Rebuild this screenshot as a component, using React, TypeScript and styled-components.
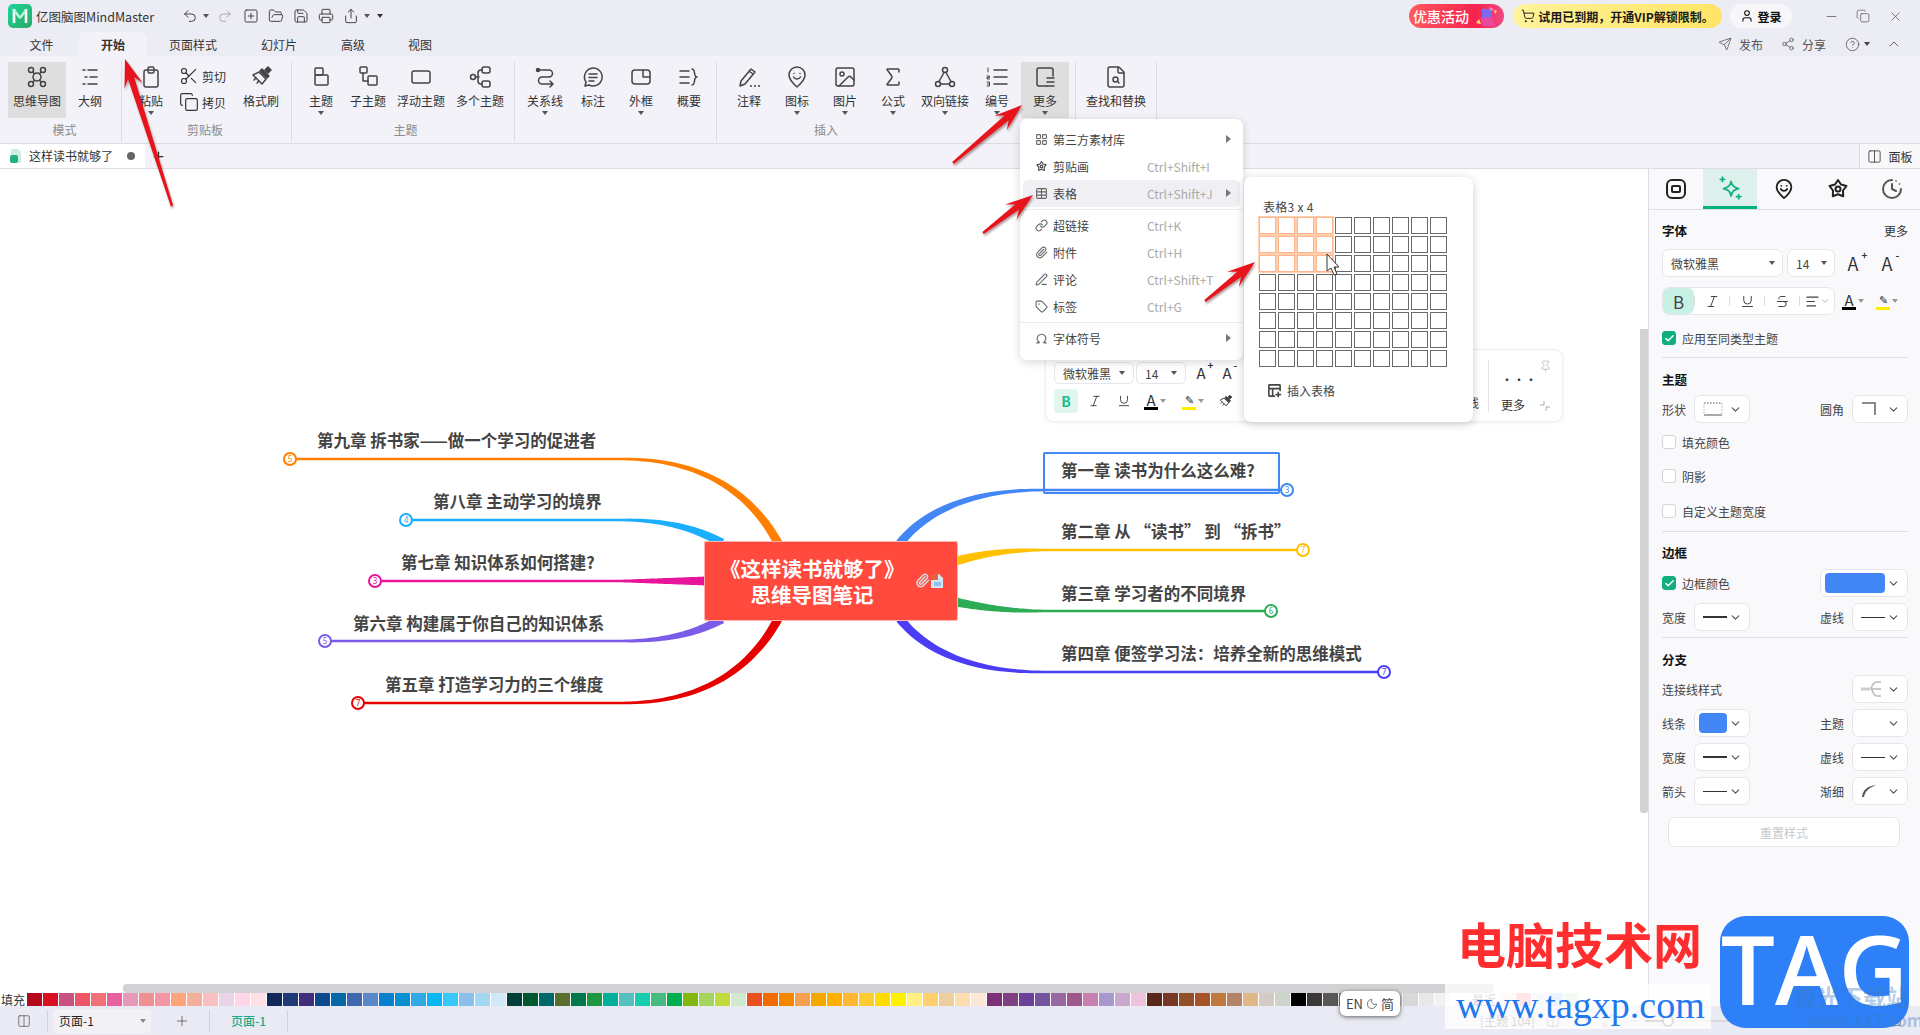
import * as React from 'react';
import styled, { createGlobalStyle } from 'styled-components';
import {
	Undo2, Redo2, SquarePlus, FolderOpen, Save, Printer, Share, ChevronUp, ChevronDown, User, ShoppingCart,
	Send, Share2, CircleHelp, X, Minus, Scissors, Copy, Image, Sigma, Plus, Columns2, Maximize, Pin,
	LayoutGrid, Link, Paperclip, Tag, Omega, Table, PenLine, Italic, Underline, Strikethrough, AlignLeft,
	Check, Square, FileSearch, Moon,
} from 'lucide-react';

const FONT = '"Noto Sans CJK SC", "Noto Sans", "Liberation Sans", sans-serif';

const GlobalStyle = createGlobalStyle`
	html, body { margin: 0; padding: 0; background: #fff; }
	body { font-family: ${FONT}; font-size: 12px; color: #333; }
	* { box-sizing: border-box; }
`;

/* ---------- shell ---------- */

const Page = styled.div`
	position: relative;
	width: 1920px;
	height: 1035px;
	overflow: hidden;
	display: flex;
	flex-direction: column;
	background: #fff;
`;

const TitleBar = styled.div`
	height: 32px;
	display: flex;
	align-items: center;
	background: #ececf4;
	padding-left: 8px;
`;

const AppName = styled.span`
	margin-left: 4px;
	font-size: 12.5px;
	color: #333;
	width: 144px;
`;

const QuickBtn = styled.span<{ $w?: number; $faint?: boolean }>`
	width: ${p => p.$w || 25}px;
	display: flex;
	align-items: center;
	justify-content: center;
	color: ${p => (p.$faint ? '#aaa' : '#444')};
`;

const TitleRight = styled.div`
	margin-left: auto;
	padding-right: 9px;
	display: flex;
	align-items: center;
`;

const Pill = styled.div<{ $w: number; $bg: string; $fg: string; $mr: number }>`
	width: ${p => p.$w}px;
	height: 24px;
	margin-right: ${p => p.$mr}px;
	border-radius: 12px;
	background: ${p => p.$bg};
	color: ${p => p.$fg};
	display: flex;
	align-items: center;
	justify-content: center;
	gap: 3px;
	font-size: 12px;
	font-weight: 700;
`;

const PromoText = styled.span`
	font-size: 14px;
	font-weight: 500;
	margin-right: 2px;
`;

const WinBtn = styled.span`
	width: 32px;
	display: flex;
	justify-content: center;
	color: #555;
`;

const TabRow = styled.div`
	height: 24px;
	display: flex;
	padding-left: 4px;
	background: #ececf4;
`;

const MenuTab = styled.div<{ $w: number; $active?: boolean }>`
	width: ${p => p.$w}px;
	display: flex;
	align-items: center;
	justify-content: center;
	font-size: 12px;
	font-weight: ${p => (p.$active ? 700 : 400)};
	color: #333;
	background: ${p => (p.$active ? '#f2f2f8' : 'transparent')};
	border-radius: 6px 6px 0 0;
`;

const TabActions = styled.div`
	margin-left: auto;
	display: flex;
	align-items: center;
	padding-right: 18px;
	color: #555;
`;

const ActionBtn = styled.span<{ $mr: number; $gap: number }>`
	display: flex;
	align-items: center;
	gap: ${p => p.$gap}px;
	margin-right: ${p => p.$mr}px;
	font-size: 12px;
	color: #555;
`;

/* ---------- ribbon ---------- */

const Ribbon = styled.div`
	height: 87px;
	display: flex;
	background: #f2f2f8;
	padding-left: 0;
`;

const Group = styled.div<{ $w: number; $pl: number }>`
	width: ${p => p.$w}px;
	margin-top: 6px;
	margin-bottom: 1px;
	padding-left: ${p => p.$pl}px;
	display: flex;
	flex-direction: column;
	border-right: 1px solid #dcdce2;
`;

const GroupBody = styled.div`
	height: 56px;
	display: flex;
`;

const GroupLabel = styled.div<{ $shift?: number }>`
	margin-top: 2px;
	height: 20px;
	line-height: 20px;
	text-align: center;
	font-size: 12px;
	color: #8c8c8c;
	transform: translateX(${p => p.$shift || 0}px);
`;

const RibbonBtn = styled.div<{ $w: number; $active?: boolean }>`
	width: ${p => p.$w}px;
	height: 56px;
	padding-top: 3px;
	display: flex;
	flex-direction: column;
	align-items: center;
	color: #444;
	background: ${p => (p.$active ? '#dededf' : 'transparent')};
`;

const RibbonLabel = styled.span`
	margin-top: 4px;
	height: 16px;
	line-height: 16px;
	font-size: 12px;
	color: #333;
	white-space: nowrap;
`;

const Caret = styled.i<{ $c?: string }>`
	display: inline-block;
	width: 0;
	height: 0;
	border-left: 3px solid transparent;
	border-right: 3px solid transparent;
	border-top: 4px solid ${p => p.$c || '#555'};
`;

const RibbonCaret = styled(Caret)`
	margin-top: 2px;
`;

const ClipColumn = styled.div`
	width: 64px;
	display: flex;
	flex-direction: column;
	justify-content: space-between;
	padding: 3px 0 5px 4px;
`;

const ClipRow = styled.div`
	height: 22px;
	display: flex;
	align-items: center;
	gap: 3px;
	font-size: 12px;
	color: #333;
`;

/* ---------- document tabs ---------- */

const DocBar = styled.div`
	height: 26px;
	display: flex;
	align-items: stretch;
	background: #f2f2f8;
	border-top: 1px solid #dcdce2;
	border-bottom: 1px solid #dcdce2;
`;

const DocTab = styled.div`
	width: 145px;
	background: #fff;
	display: flex;
	align-items: center;
	padding: 0 0 1px 9px;
	gap: 6px;
	font-size: 12px;
`;

const DocDot = styled.i`
	width: 8px;
	height: 8px;
	margin-left: 8px;
	border-radius: 50%;
	background: #666;
`;

const AddDoc = styled.span`
	margin-left: 6px;
	display: flex;
	align-items: center;
	color: #333;
`;

const PanelToggle = styled.div`
	margin-left: auto;
	width: 61px;
	background: #f8f8fb;
	border-left: 1px solid #dcdce2;
	display: flex;
	align-items: center;
	justify-content: center;
	gap: 6px;
	font-size: 12px;
`;

/* ---------- main area ---------- */

const Main = styled.div`
	flex: 1;
	display: flex;
	min-height: 0;
`;

const LeftArea = styled.div`
	width: 1648px;
	display: flex;
	flex-direction: column;
`;

const Canvas = styled.div`
	position: relative;
	flex: 1;
	background: #fff;
`;

const MapSvg = styled.svg`
	position: absolute;
	left: 0;
	top: 0;
`;

const TopicText = styled.div<{ $x: number; $y: number }>`
	position: absolute;
	left: ${p => p.$x}px;
	top: ${p => p.$y - 168 - 14}px;
	height: 24px;
	line-height: 24px;
	font-size: 16.5px;
	font-weight: 700;
	color: #444;
	white-space: nowrap;
`;

const SelectBox = styled.div`
	position: absolute;
	left: 1043px;
	top: ${451 - 168}px;
	width: 237px;
	height: 42px;
	border: 2px solid #4287f5;
	border-radius: 2px;
`;

const CentralTopic = styled.div`
	position: absolute;
	left: 704px;
	top: ${540 - 168}px;
	width: 254px;
	height: 80px;
	background: #ff4a3d;
	border-radius: 3px;
	box-shadow: 0 0 0 1px #ffb4ae inset;
	color: #fff;
	font-size: 20.5px;
	font-weight: 700;
	line-height: 26px;
	display: flex;
	align-items: center;
	padding-left: 16px;
`;

const CentralTitle = styled.div`
	width: 184px;
	text-align: center;
	white-space: nowrap;
`;

const CentralIcons = styled.div`
	position: absolute;
	right: 14px;
	top: 32px;
	display: flex;
`;

const VScroll = styled.div`
	position: absolute;
	right: 0;
	top: ${328 - 168}px;
	width: 8px;
	height: 484px;
	background: #d2d2d4;
	border-radius: 0 0 3px 3px;
`;

const HScrollTrack = styled.div`
	height: 9px;
	padding-left: 123px;
	background: #fff;
`;

const HScrollThumb = styled.div`
	width: 1371px;
	height: 9px;
	background: #d2d2d4;
	border-radius: 4px;
`;

const ColorBar = styled.div`
	height: 13px;
	display: flex;
	align-items: center;
	background: #fff;
`;

const FillLabel = styled.span`
	width: 27px;
	padding-left: 1px;
	font-size: 12px;
	line-height: 13px;
	color: #333;
`;

const Swatch = styled.i<{ $c: string }>`
	width: 16px;
	height: 13px;
	border-right: 1px solid #fff;
	background: ${p => p.$c};
`;

const RecentLabel = styled.span`
	margin-left: 21px;
	width: 28px;
	font-size: 12px;
	color: #555;
`;

const StatusBar = styled.div`
	height: 29px;
	display: flex;
	align-items: center;
	background: #eaeaf4;
`;

const StatusCell = styled.div<{ $w: number; $green?: boolean; $line?: boolean }>`
	width: ${p => p.$w}px;
	height: 22px;
	display: flex;
	align-items: center;
	justify-content: center;
	font-size: 12px;
	color: ${p => (p.$green ? '#1aaa88' : '#555')};
	font-weight: ${p => (p.$green ? 500 : 400)};
	border-right: ${p => (p.$line ? '1px solid #d2d2da' : 'none')};
`;

const PageSelect = styled.div`
	width: 98px;
	height: 24px;
	margin: 0 4px 0 5px;
	padding: 0 5px 0 6px;
	border-radius: 4px;
	background: #f2f2f6;
	display: flex;
	align-items: center;
	justify-content: space-between;
	font-size: 12px;
	color: #222;
`;

const StatusRight = styled.div`
	margin-left: auto;
	margin-right: 8px;
	display: flex;
	align-items: center;
	color: #777;
`;

const ZoomTrack = styled.div`
	position: relative;
	width: 100px;
	height: 2px;
	background: linear-gradient(90deg, #666 24px, #d8d8de 24px);
`;

const ZoomKnob = styled.i`
	position: absolute;
	left: 17px;
	top: -5px;
	width: 12px;
	height: 12px;
	border-radius: 50%;
	background: #fff;
	border: 2px solid #666;
`;

/* ---------- right panel ---------- */

const Panel = styled.aside`
	width: 272px;
	background: #f9f9fc;
	border-left: 1px solid #dcdce2;
`;

const PanelTabs = styled.div`
	height: 41px;
	display: flex;
	border-bottom: 1px solid #e0e0e4;
	color: #222;
`;

const PanelTab = styled.div<{ $active?: boolean }>`
	width: 54px;
	display: flex;
	align-items: center;
	justify-content: center;
	background: ${p => (p.$active ? '#ddf0eb' : 'transparent')};
	border-bottom: ${p => (p.$active ? '3px solid #00b27a' : 'none')};
	color: ${p => (p.$active ? '#10b27e' : 'inherit')};
`;

const PanelBody = styled.div`
	padding: 12px 12px 0 13px;
`;

const SectionHead = styled.div<{ $mt?: number }>`
	height: 18px;
	line-height: 18px;
	margin-top: ${p => p.$mt || 0}px;
	display: flex;
	justify-content: space-between;
	font-size: 12.5px;
	font-weight: 700;
	color: #111;
`;

const MoreLink = styled.span`
	font-size: 12px;
	font-weight: 400;
	color: #333;
`;

const Row = styled.div<{ $mt: number; $between?: boolean }>`
	height: 28px;
	margin-top: ${p => p.$mt}px;
	display: flex;
	align-items: center;
	justify-content: ${p => (p.$between ? 'space-between' : 'flex-start')};
`;

const Cluster = styled.div`
	display: flex;
	align-items: center;
`;

const FieldLabel = styled.span`
	width: 32px;
	font-size: 12px;
	color: #444;
	white-space: nowrap;
`;

const Select = styled.div<{ $w: number; $ml?: number }>`
	width: ${p => p.$w}px;
	height: 28px;
	margin-left: ${p => p.$ml || 0}px;
	padding: 0 7px 0 8px;
	background: #fff;
	border: 1px solid #e6e6ea;
	border-radius: 7px;
	display: flex;
	align-items: center;
	justify-content: space-between;
	font-size: 12px;
	color: #444;
`;

const IconBtn = styled.span<{ $w: number }>`
	width: ${p => p.$w}px;
	display: flex;
	align-items: center;
	justify-content: center;
	gap: 2px;
	color: #333;
`;

const BigA = styled.span<{ $size: number }>`
	font-size: ${p => p.$size}px;
	line-height: 20px;
	font-weight: 400;
	position: relative;
	color: #333;
	sup {
		position: absolute;
		left: ${p => p.$size - 4}px;
		top: -5px;
		font-size: 10px;
		line-height: 14px;
		font-weight: 700;
	}
`;

const StyleStrip = styled.div`
	width: 173px;
	height: 28px;
	background: #fff;
	border: 1px solid #e6e6ea;
	border-radius: 7px;
	display: flex;
	align-items: center;
`;

const StripBtn = styled.span<{ $w: number; $on?: boolean }>`
	width: ${p => p.$w}px;
	height: 26px;
	display: flex;
	align-items: center;
	justify-content: center;
	font-size: 17px;
	color: #444;
	border-radius: 6px;
	background: ${p => (p.$on ? '#c9f0e4' : 'transparent')};
`;

const StripSep = styled.i`
	width: 1px;
	height: 10px;
	background: #ddd;
`;

const ColorA = styled.span<{ $bar: string; $size?: number }>`
	display: inline-flex;
	flex-direction: column;
	align-items: center;
	width: 14px;
	font-size: ${p => p.$size || 15}px;
	line-height: 15px;
	color: #333;
	&::after {
		content: '';
		width: 14px;
		height: 3px;
		background: ${p => p.$bar};
	}
`;

const CheckRow = styled.div<{ $mt: number }>`
	height: 18px;
	margin-top: ${p => p.$mt}px;
	display: flex;
	align-items: center;
	gap: 6px;
	font-size: 12px;
	color: #444;
`;

const CheckBox = styled.span<{ $on?: boolean }>`
	width: 14px;
	height: 14px;
	border-radius: 3px;
	display: flex;
	align-items: center;
	justify-content: center;
	border: 1px solid ${p => (p.$on ? '#12ae7e' : '#d4d4d8')};
	background: ${p => (p.$on ? '#12ae7e' : '#fff')};
	color: #fff;
`;

const Divider = styled.div<{ $mt: number }>`
	height: 1px;
	margin-top: ${p => p.$mt}px;
	background: #e0e0e4;
`;

const ColorFill = styled.i<{ $w: number }>`
	width: ${p => p.$w}px;
	height: 20px;
	margin-left: -4px;
	border-radius: 4px;
	background: #4287f5;
`;

const LineSample = styled.i<{ $h: number }>`
	width: 24px;
	height: ${p => p.$h}px;
	background: #333;
`;

const ResetBtn = styled.div`
	width: 232px;
	height: 30px;
	margin: 12px 0 0 6px;
	border: 1px solid #e6e6ea;
	border-radius: 7px;
	background: #fff;
	display: flex;
	align-items: center;
	justify-content: center;
	font-size: 12px;
	color: #c8c8c8;
`;

/* ---------- floating bits ---------- */

const MiniBar = styled.div`
	position: absolute;
	left: 1045px;
	top: 349px;
	width: 518px;
	height: 73px;
	background: #fff;
	border: 1px solid #eeeef0;
	border-radius: 8px;
	box-shadow: 0 1px 4px rgba(0, 0, 0, 0.06);
	padding: 12px 0 0 8px;
`;

const MiniRow = styled.div<{ $mt?: number }>`
	display: flex;
	align-items: center;
	margin-top: ${p => p.$mt || 0}px;
`;

const MiniSelect = styled.div<{ $w: number }>`
	width: ${p => p.$w}px;
	height: 22px;
	margin-right: 2px;
	padding: 0 8px;
	border: 1px solid #e6e6ea;
	border-radius: 5px;
	display: flex;
	align-items: center;
	justify-content: space-between;
	font-size: 12px;
	color: #444;
`;

const MiniBold = styled.span`
	width: 24px;
	height: 24px;
	border-radius: 4px;
	background: #e2f6f0;
	color: #18be90;
	font-weight: 700;
	font-size: 14px;
	display: flex;
	align-items: center;
	justify-content: center;
`;

const MiniTail = styled.div`
	position: absolute;
	left: 442px;
	top: 10px;
	width: 76px;
	height: 52px;
	border-left: 1px solid #e4e4e8;
	color: #888;
`;

const MiniMore = styled.div`
	position: absolute;
	left: 12px;
	top: 7px;
	width: 24px;
	text-align: center;
	color: #333;
	font-size: 12px;
	line-height: 25px;
`;

const MiniPin = styled.span<{ $top: number }>`
	position: absolute;
	left: 50px;
	top: ${p => p.$top}px;
	display: flex;
`;

const MiniCut = styled.span`
	position: absolute;
	left: 421px;
	top: 44px;
	font-size: 12px;
	color: #444;
`;

const DropMenu = styled.div`
	position: absolute;
	left: 1020px;
	top: 119px;
	width: 223px;
	padding: 7px 0 8px;
	background: #fff;
	border-radius: 7px;
	box-shadow: 0 2px 10px rgba(0, 0, 0, 0.16);
`;

const MenuItem = styled.div<{ $hover?: boolean }>`
	height: 27px;
	margin: 0 3px;
	padding-left: 12px;
	display: flex;
	align-items: center;
	border-radius: 5px;
	background: ${p => (p.$hover ? '#f0f0f4' : 'transparent')};
	font-size: 12px;
	color: #444;
	position: relative;
`;

const MenuName = styled.span`
	margin-left: 5px;
	width: 94px;
`;

const MenuKey = styled.span`
	color: #aaa;
	font-size: 12px;
`;

const MenuArrow = styled.i`
	position: absolute;
	right: 9px;
	top: 9px;
	border-top: 4.5px solid transparent;
	border-bottom: 4.5px solid transparent;
	border-left: 5px solid #777;
`;

const MenuLine = styled.div<{ $mt: number; $mb: number }>`
	height: 1px;
	margin: ${p => p.$mt}px 0 ${p => p.$mb}px;
	background: #ececf0;
`;

const TablePop = styled.div`
	position: absolute;
	left: 1244px;
	top: 177px;
	width: 229px;
	height: 245px;
	padding: 21px 0 0 15px;
	background: #fff;
	border-radius: 7px;
	box-shadow: 0 2px 10px rgba(0, 0, 0, 0.2);
`;

const PopTitle = styled.div`
	height: 18px;
	line-height: 18px;
	padding-left: 4px;
	font-size: 12px;
	letter-spacing: 0.3px;
	color: #444;
`;

const CellGrid = styled.div`
	margin-top: 1px;
	display: grid;
	grid-template-columns: repeat(10, 17px);
	grid-auto-rows: 17px;
	gap: 2px;
`;

const Cell = styled.i<{ $on?: boolean }>`
	border: 1.5px solid ${p => (p.$on ? '#ffb48c' : '#6a6a6a')};
	box-shadow: ${p => (p.$on ? '0 0 0 1px #ffd0b0' : 'none')};
	background: #fff;
`;

const InsertRow = styled.div`
	margin: 15px 0 0 8px;
	display: flex;
	align-items: center;
	gap: 5px;
	font-size: 12px;
	color: #444;
`;

const ImeBadge = styled.div`
	position: absolute;
	left: 1340px;
	top: 991px;
	width: 60px;
	height: 25px;
	background: #fff;
	border-radius: 6px;
	box-shadow: 0 1px 4px rgba(0, 0, 0, 0.6);
	display: flex;
	align-items: center;
	justify-content: center;
	gap: 3px;
	font-size: 13px;
	color: #444;
`;

const Overlay = styled.svg`
	position: absolute;
	left: 0;
	top: 0;
	pointer-events: none;
`;

const ArrowShape = styled.polygon`
	fill: #e8141c;
	filter: drop-shadow(1px 2px 1px rgba(60, 0, 0, 0.4));
`;

const WashRect = styled.div`
	position: absolute;
	left: 1445px;
	top: 984px;
	width: 266px;
	height: 45px;
	background: rgba(255, 255, 255, 0.78);
`;

const SiteName = styled.div`
	position: absolute;
	left: 1457px;
	top: 909px;
	font-size: 49px;
	line-height: 68px;
	font-weight: 700;
	color: #ff2d2d;
	white-space: nowrap;
`;

const SiteUrl = styled.div`
	position: absolute;
	left: 1456px;
	top: 985px;
	font-family: 'Liberation Serif', serif;
	font-size: 38px;
	line-height: 40px;
	font-weight: 400;
	color: #1f78ee;
	white-space: nowrap;
`;

const TagBadge = styled.div`
	position: absolute;
	left: 1720px;
	top: 916px;
	width: 189px;
	height: 112px;
	border-radius: 26px;
	background: #2e80f8;
	color: #fff;
	font-family: 'Open Sans', 'Liberation Sans', sans-serif;
	font-size: 96px;
	line-height: 104px;
	font-weight: 600;
	text-align: center;
	overflow: hidden;
`;

const FaintMark = styled.div<{ $x: number; $y: number; $size: number }>`
	position: absolute;
	left: ${p => p.$x}px;
	top: ${p => p.$y}px;
	font-size: ${p => p.$size}px;
	line-height: 1;
	font-weight: 700;
	color: rgba(60, 120, 190, 0.38);
	white-space: nowrap;
`;

/* ---------- drawings ---------- */

const Glyph = styled.svg.attrs<{ $s?: number; $sw?: number }>(p => ({
	viewBox: '0 0 24 24',
	width: p.$s || 24,
	height: p.$s || 24,
}))<{ $s?: number; $sw?: number }>`
	fill: none;
	stroke: currentColor;
	stroke-width: ${p => p.$sw || 1.5};
	stroke-linecap: round;
	stroke-linejoin: round;
	flex: none;
`;

const MindIcon = () => (
	<Glyph>
		<circle cx="6" cy="5" r="2.5" /><circle cx="18" cy="5" r="2.5" /><circle cx="6" cy="19" r="2.5" /><circle cx="18" cy="19" r="2.5" />
		<circle cx="12" cy="12" r="4" /><path d="M8 7l1.5 2M16 7l-1.5 2M8 17l1.5-2M16 17l-1.5-2" />
	</Glyph>
);
const OutlineIcon = () => (
	<Glyph><path d="M5 5h2M10 5h9M7 12h2M12 12h7M5 19h2M10 19h9" /></Glyph>
);
const PasteIcon = () => (
	<Glyph><rect x="5" y="5" width="14" height="17" rx="2" /><rect x="9" y="2" width="6" height="6" rx="1.5" /></Glyph>
);
const BrushIcon = ({ s = 24 }: { s?: number }) => (
	<Glyph $s={s}>
		<path d="M10 7l7 7-4 5-9-9z" />
		<path d="M11 6l2-2 7 7-2 2z" fill="currentColor" />
		<path d="M16 5l3-3 3 3-3 3z" fill="currentColor" />
		<path d="M7 13l-2 2M10 16l-2 2" />
	</Glyph>
);
const TopicIcon = () => (
	<Glyph><rect x="6" y="3" width="8" height="7" rx="1" /><rect x="6" y="10" width="13" height="10" rx="1" /></Glyph>
);
const SubTopicIcon = () => (
	<Glyph><rect x="4" y="2" width="7" height="6" rx="1" /><path d="M7 8v8h5" /><rect x="12" y="11" width="9" height="9" rx="1" /></Glyph>
);
const FloatIcon = () => <Glyph><rect x="3" y="6" width="18" height="12" rx="2" /></Glyph>;
const MultiIcon = () => (
	<Glyph>
		<rect x="14" y="2" width="8" height="6" rx="2" /><rect x="14" y="16" width="8" height="6" rx="2" /><circle cx="5" cy="12" r="2.5" />
		<path d="M7.500 12H11M14 5h-1a3 3 0 0 0-3 3v8a3 3 0 0 0 3 3h1" />
	</Glyph>
);
const RelationIcon = () => (
	<Glyph><circle cx="5" cy="5" r="1.500" fill="currentColor" /><path d="M6 5h10a3.500 3.500 0 0 1 0 7H9a3.500 3.500 0 0 0 0 7h11M17 16l3 3-3 3" /></Glyph>
);
const CalloutIcon = () => (
	<Glyph><path d="M12 3a9 9 0 1 1-4 17l-4 1 1-4a9 9 0 0 1 7-14z" /><path d="M8 9h8M8 12.500h8M8 16h5" /></Glyph>
);
const FrameIcon = () => (
	<Glyph><rect x="3" y="5" width="18" height="14" rx="3" /><path d="M14 5v7h7" /></Glyph>
);
const SummaryIcon = () => (
	<Glyph><path d="M3 6h9M3 12h9M3 18h9M15 4c4 0 1 8 5 8-4 0-1 8-5 8" /></Glyph>
);
const NoteIcon = () => (
	<Glyph><path d="M3 21l1-5L14 4l4 3L8 19zM12 6l4 3" /><path d="M14 21h.01M18 21h.01M22 21h.01" strokeWidth="2" /></Glyph>
);
const PinFace = ({ s = 24, sw = 1.5 }: { s?: number; sw?: number }) => (
	<Glyph $s={s} $sw={sw}>
		<path d="M12 2a8 8 0 0 1 8 8c0 5-8 12-8 12S4 15 4 10a8 8 0 0 1 8-8z" />
		<path d="M9 8.500h.01M15 8.500h.01M8.500 12a4 4 0 0 0 7 0" />
	</Glyph>
);
const BiLinkIcon = () => (
	<Glyph><circle cx="12" cy="5" r="2.500" /><circle cx="5" cy="19" r="2.500" /><circle cx="19" cy="19" r="2.500" /><path d="M11 7.500L6 16.500M13 7.500l5 9M7.500 19h9" /></Glyph>
);
const NumberIcon = () => (
	<Glyph>
		<path d="M9 5h13M9 12h13M9 19h13" />
		<path d="M3 3v4M2 11h2.500v1.500H2V14h2.500M2 17h2.500v4H2M2.500 19h2" strokeWidth="1" />
	</Glyph>
);
const MoreIcon = () => (
	<Glyph><path d="M20 11V5a2 2 0 0 0-2-2H6a2 2 0 0 0-2 2v14a2 2 0 0 0 2 2h8" /><path d="M14 13h7M14 17h7M14 21h7" /></Glyph>
);
const BoxTabIcon = () => (
	<Glyph $sw={2}><rect x="3" y="3" width="18" height="18" rx="5" /><rect x="8" y="9" width="8" height="6" rx="1" /></Glyph>
);
const SparkIcon = () => (
	<Glyph $s={26} $sw={1.6}>
		<path d="M13 6c1 4 2.500 5.500 7 6.500-4.500 1-6 2.500-7 7-1-4.500-2.500-6-7-7 4.500-1 6-2.500 7-6.500z" />
		<path d="M5 2v4M3 4h4M20 18v4M18 20h4" />
	</Glyph>
);
const FlowerIcon = ({ s = 24, sw = 2 }: { s?: number; sw?: number }) => (
	<Glyph $s={s} $sw={sw}>
		<path d="M12 3l3 4.500 5.500 1.500-3.500 4.500.2 5.700-5.200-2-5.200 2 .2-5.700L3.500 9 9 7.500z" />
		<circle cx="12" cy="12" r="2.500" />
	</Glyph>
);
const HistoryIcon = () => (
	<Glyph $sw={2}>
		<path d="M12 3a9 9 0 1 0 9 9" stroke="#555" />
		<path d="M12 7v5l4 2" stroke="#555" /><path d="M16 4l.01 0M19.500 7l.01 0" stroke="#888" />
	</Glyph>
);
const InsertTableIcon = () => (
	<Glyph $s={15} $sw={2.6}>
		<path d="M12 21H4a1 1 0 0 1-1-1V4a1 1 0 0 1 1-1h16a1 1 0 0 1 1 1v8M3 9h18M9 9v12" />
		<path d="M18 15v7M14.500 18.500h7" />
	</Glyph>
);
const LogoMark = () => (
	<svg width="24" height="24" viewBox="0 0 24 24">
		<defs>
			<linearGradient id="lg" x1="0" y1="0" x2="1" y2="1">
				<stop offset="0" stopColor="#1ed69a" />
				<stop offset="1" stopColor="#2aa868" />
			</linearGradient>
		</defs>
		<rect width="24" height="24" rx="5" fill="url(#lg)" />
		<path d="M6 5v14M18 5v14" stroke="#fff" strokeWidth="2.600" />
		<path d="M6 6l6 8M18 6l-6 8" stroke="#bff4dd" strokeWidth="2.400" />
	</svg>
);
const PromoGift = () => (
	<svg width="26" height="22" viewBox="0 0 26 22">
		<rect x="8" y="4" width="9" height="9" fill="#7a6cf0" />
		<path d="M6 13l12-1 3 9H9z" fill="#e84aa0" />
		<path d="M2 18l3-4 2 5zM20 5l3 1-2 3z" fill="#ffe060" />
		<path d="M15 2l5 2-3 2z" fill="#ff8ab0" />
	</svg>
);
const ShapePreview = () => (
	<svg width="20" height="14" viewBox="0 0 20 14">
		<path d="M1 1h18" stroke="#555" strokeDasharray="1.500 1.500" fill="none" />
		<path d="M1 1v12M19 1v12" stroke="#aaa" strokeDasharray="1.500 1.500" fill="none" />
		<path d="M1 13h18" stroke="#555" fill="none" />
	</svg>
);
const CornerPreview = () => (
	<svg width="16" height="14" viewBox="0 0 16 14"><path d="M1 1h13v12" stroke="#666" strokeWidth="1.500" fill="none" /></svg>
);
const BranchPreview = () => (
	<svg width="22" height="18" viewBox="0 0 22 18">
		<path d="M0 9h9" stroke="#ccc" strokeWidth="3" fill="none" />
		<path d="M20 2h-4c-4 0-4 3-6 6 2 3 2 8 6 8h4M10 9h10" stroke="#bbb" strokeWidth="1.500" fill="none" />
	</svg>
);
const TaperPreview = () => (
	<svg width="16" height="14" viewBox="0 0 16 14"><path d="M1 13C2 5 7 2 15 1 8 4 4 7 3 13z" fill="#555" /></svg>
);
const CollapseCorners = () => (
	<svg width="12" height="12" viewBox="0 0 12 12"><path d="M5 1v4H1M7 11V7h4" stroke="#aaa" fill="none" /></svg>
);
const Chevron = () => <ChevronDown size={13} color="#555" strokeWidth={2.2} />;

// tapered bezier from thin end p0 to thick end p3, as a filled outline
type Pt = [number, number];
function taperPath(p0: Pt, p1: Pt, p2: Pt, p3: Pt, w0: number, w1: number) {
	const left: string[] = [];
	const right: string[] = [];
	const n = 32;
	for (let i = 0; i <= n; i++) {
		const t = i / n;
		const u = 1 - t;
		const x = u * u * u * p0[0] + 3 * u * u * t * p1[0] + 3 * u * t * t * p2[0] + t * t * t * p3[0];
		const y = u * u * u * p0[1] + 3 * u * u * t * p1[1] + 3 * u * t * t * p2[1] + t * t * t * p3[1];
		const dx = 3 * u * u * (p1[0] - p0[0]) + 6 * u * t * (p2[0] - p1[0]) + 3 * t * t * (p3[0] - p2[0]);
		const dy = 3 * u * u * (p1[1] - p0[1]) + 6 * u * t * (p2[1] - p1[1]) + 3 * t * t * (p3[1] - p2[1]);
		const len = Math.hypot(dx, dy) || 1;
		const w = (w0 + (w1 - w0) * t) / 2;
		left.push(`${(x - (dy / len) * w).toFixed(1)},${(y + (dx / len) * w).toFixed(1)}`);
		right.unshift(`${(x + (dy / len) * w).toFixed(1)},${(y - (dx / len) * w).toFixed(1)}`);
	}
	return `M${left.join('L')}L${right.join('L')}Z`;
}

// annotation arrow, thin tail to a notched head
function arrowPoints(tail: Pt, tip: Pt) {
	const dx = tip[0] - tail[0];
	const dy = tip[1] - tail[1];
	const len = Math.hypot(dx, dy);
	const ux = dx / len;
	const uy = dy / len;
	const at = (along: number, side: number) =>
		`${(tip[0] - ux * along - uy * side).toFixed(1)},${(tip[1] - uy * along + ux * side).toFixed(1)}`;
	return [at(len, 1.2), at(20, 3.2), at(28, 9.5), at(0, 0), at(28, -9.5), at(20, -3.2), at(len, -1.2)].join(' ');
}

/* ---------- data ---------- */

const BRANCHES = [
	{ text: '第九章 拆书家——做一个学习的促进者', x: 317, ty: 441, ly: 458, cx: 290, n: 5, c: '#ff7f00', side: 'l', hub: [778, 542], c1: [700, 458], c2: [750, 490] },
	{ text: '第八章 主动学习的境界', x: 433, ty: 502, ly: 519, cx: 406, n: 4, c: '#1aaeff', side: 'l', hub: [722, 542], c1: [665, 519], c2: [695, 527] },
	{ text: '第七章 知识体系如何搭建?', x: 401, ty: 563, ly: 580, cx: 375, n: 3, c: '#e8149a', side: 'l', hub: [706, 580], c1: [650, 580], c2: [680, 580] },
	{ text: '第六章 构建属于你自己的知识体系', x: 353, ty: 624, ly: 640, cx: 325, n: 5, c: '#7b5ce8', side: 'l', hub: [722, 618], c1: [665, 640], c2: [695, 633] },
	{ text: '第五章 打造学习力的三个维度', x: 385, ty: 685, ly: 702, cx: 358, n: 7, c: '#e60000', side: 'l', hub: [778, 618], c1: [700, 702], c2: [750, 670] },
	{ text: '第一章 读书为什么这么难?', x: 1061, ty: 471, ly: 489, cx: 1287, n: 3, c: '#4287f5', side: 'r', hub: [900, 542], c1: [980, 489], c2: [930, 505] },
	{ text: '第二章 从 “读书” 到 “拆书”', x: 1061, ty: 532, ly: 549, cx: 1303, n: 7, c: '#ffc000', side: 'r', hub: [956, 560], c1: [1010, 549], c2: [985, 552] },
	{ text: '第三章 学习者的不同境界', x: 1061, ty: 594, ly: 610, cx: 1271, n: 6, c: '#2eab55', side: 'r', hub: [956, 601], c1: [1010, 610], c2: [985, 607] },
	{ text: '第四章 便签学习法：培养全新的思维模式', x: 1061, ty: 654, ly: 671, cx: 1384, n: 7, c: '#4a3df5', side: 'r', hub: [900, 618], c1: [980, 671], c2: [930, 655] },
];

const COLORS = [
	'#b5081a', '#d90f23', '#c85280', '#ee5567', '#f07278', '#e860a0', '#e59ab8', '#f09090', '#f595a5', '#ffa47a', '#f2b09a', '#f8c0c0', '#ead5e8', '#ffd6e8', '#ffe0e6',
	'#10285a', '#203a78', '#402e7c', '#0c4a90', '#0568a8', '#4068b0', '#5888c8', '#0880d0', '#0890d0', '#30aae4', '#08b8f4', '#38c8fa', '#8ac0ea', '#a4d8f0', '#cfeaf6',
	'#004038', '#005830', '#00686a', '#5a6e30', '#00784e', '#1e9840', '#00b09a', '#55c0c0', '#18ccb0', '#48bc80', '#00b050', '#80b810', '#a4d460', '#c0dc3c', '#d0ead0',
	'#e85020', '#f06c00', '#f48600', '#f4a050', '#f4a800', '#ffb000', '#ffb832', '#fccc30', '#ffdc00', '#fff000', '#fff080', '#ffd070', '#eccf9c', '#fddcb0', '#fde8d8',
	'#7c3078', '#804084', '#6a4098', '#74549c', '#9868a0', '#a0588c', '#c880b0', '#a898d0', '#c8a8cc', '#ecc4dc',
	'#5a2818', '#783828', '#944e28', '#a85228', '#c07a40', '#b48468', '#e0b888', '#d4ccc4', '#ccd4cc',
	'#000000', '#3c3838', '#585858', '#808080', '#989898', '#b0b0b0', '#c8c8c8', '#d8d8d8', '#e8e8e8', '#f2f2f2',
];

const RECENT = ['#ffe8e8', '#ff9090', '#dfe8fa', '#b0ccf4', '#cfe8cf'];

const ARROWS: [Pt, Pt][] = [
	[[172, 206], [125, 59]],
	[[953, 163], [1022, 105]],
	[[983, 233], [1033, 195]],
	[[1205, 301], [1255, 262]],
];

const Rb = ({ w, label, caret, active, children }: { w: number; label: string; caret?: boolean; active?: boolean; children: React.ReactNode }) => (
	<RibbonBtn $w={w} $active={active}>
		{children}
		<RibbonLabel>{label}</RibbonLabel>
		{caret && <RibbonCaret />}
	</RibbonBtn>
);

const MenuRow = ({ icon, name, hotkey, arrow, hover }: { icon: React.ReactNode; name: string; hotkey?: string; arrow?: boolean; hover?: boolean }) => (
	<MenuItem $hover={hover}>
		{icon}
		<MenuName>{name}</MenuName>
		{hotkey && <MenuKey>{hotkey}</MenuKey>}
		{arrow && <MenuArrow />}
	</MenuItem>
);

export default function App() {
	return (
		<Page>
			<GlobalStyle />

			<TitleBar>
				<LogoMark />
				<AppName>亿图脑图MindMaster</AppName>
				<QuickBtn $w={20}><Undo2 size={16} strokeWidth={1.5} /></QuickBtn>
				<QuickBtn $w={12}><Caret /></QuickBtn>
				<QuickBtn $w={26} $faint><Redo2 size={16} strokeWidth={1.5} /></QuickBtn>
				<QuickBtn><SquarePlus size={16} strokeWidth={1.5} /></QuickBtn>
				<QuickBtn><FolderOpen size={16} strokeWidth={1.5} /></QuickBtn>
				<QuickBtn><Save size={16} strokeWidth={1.5} /></QuickBtn>
				<QuickBtn><Printer size={16} strokeWidth={1.5} /></QuickBtn>
				<QuickBtn><Share size={16} strokeWidth={1.5} /></QuickBtn>
				<QuickBtn $w={8}><Caret /></QuickBtn>
				<QuickBtn $w={18}><Caret $c="#333" /></QuickBtn>
				<TitleRight>
					<Pill $w={95} $mr={9} $bg="linear-gradient(90deg, #ff5a5f, #f6224f 70%, #f04a80)" $fg="#fff">
						<PromoText>优惠活动</PromoText>
						<PromoGift />
					</Pill>
					<Pill $w={209} $mr={8} $bg="linear-gradient(90deg, #fff39a, #ffe466)" $fg="#1a1a1a">
						<ShoppingCart size={14} strokeWidth={1.6} />
						试用已到期，开通VIP解锁限制。
					</Pill>
					<Pill $w={62} $mr={23} $bg="#f7f7fa" $fg="#111">
						<User size={14} strokeWidth={1.8} />
						登录
					</Pill>
					<WinBtn><Minus size={15} strokeWidth={1.2} /></WinBtn>
					<WinBtn><Copy size={14} strokeWidth={1.2} /></WinBtn>
					<WinBtn><X size={15} strokeWidth={1.2} /></WinBtn>
				</TitleRight>
			</TitleBar>

			<TabRow>
				<MenuTab $w={75}>文件</MenuTab>
				<MenuTab $w={68} $active>开始</MenuTab>
				<MenuTab $w={92}>页面样式</MenuTab>
				<MenuTab $w={80}>幻灯片</MenuTab>
				<MenuTab $w={68}>高级</MenuTab>
				<MenuTab $w={66}>视图</MenuTab>
				<TabActions>
					<ActionBtn $mr={18} $gap={7}><Send size={14} strokeWidth={1.3} />发布</ActionBtn>
					<ActionBtn $mr={19} $gap={7}><Share2 size={14} strokeWidth={1.3} />分享</ActionBtn>
					<ActionBtn $mr={16} $gap={4}><CircleHelp size={15} strokeWidth={1.3} /><Caret $c="#444" /></ActionBtn>
					<ChevronUp size={16} strokeWidth={1.3} />
				</TabActions>
			</TabRow>

			<Ribbon>
				<Group $w={122} $pl={8}>
					<GroupBody>
						<Rb w={58} label="思维导图" active><MindIcon /></Rb>
						<Rb w={48} label="大纲"><OutlineIcon /></Rb>
					</GroupBody>
					<GroupLabel>模式</GroupLabel>
				</Group>
				<Group $w={170} $pl={5}>
					<GroupBody>
						<Rb w={48} label="粘贴" caret><PasteIcon /></Rb>
						<ClipColumn>
							<ClipRow><Scissors size={20} strokeWidth={1.4} />剪切</ClipRow>
							<ClipRow><Copy size={20} strokeWidth={1.4} />拷贝</ClipRow>
						</ClipColumn>
						<Rb w={44} label="格式刷"><BrushIcon /></Rb>
					</GroupBody>
					<GroupLabel $shift={-4}>剪贴板</GroupLabel>
				</Group>
				<Group $w={223} $pl={5}>
					<GroupBody>
						<Rb w={48} label="主题" caret><TopicIcon /></Rb>
						<Rb w={46} label="子主题"><SubTopicIcon /></Rb>
						<Rb w={60} label="浮动主题"><FloatIcon /></Rb>
						<Rb w={58} label="多个主题"><MultiIcon /></Rb>
					</GroupBody>
					<GroupLabel>主题</GroupLabel>
				</Group>
				<Group $w={202} $pl={6}>
					<GroupBody>
						<Rb w={48} label="关系线" caret><RelationIcon /></Rb>
						<Rb w={48} label="标注"><CalloutIcon /></Rb>
						<Rb w={48} label="外框" caret><FrameIcon /></Rb>
						<Rb w={48} label="概要"><SummaryIcon /></Rb>
					</GroupBody>
				</Group>
				<Group $w={359} $pl={8}>
					<GroupBody>
						<Rb w={48} label="注释"><NoteIcon /></Rb>
						<Rb w={48} label="图标" caret><PinFace /></Rb>
						<Rb w={48} label="图片" caret><Image size={24} strokeWidth={1.5} /></Rb>
						<Rb w={48} label="公式" caret><Sigma size={24} strokeWidth={1.5} /></Rb>
						<Rb w={56} label="双向链接" caret><BiLinkIcon /></Rb>
						<Rb w={48} label="编号" caret><NumberIcon /></Rb>
						<Rb w={48} label="更多" caret active><MoreIcon /></Rb>
					</GroupBody>
					<GroupLabel $shift={-74}>插入</GroupLabel>
				</Group>
				<Group $w={81} $pl={0}>
					<GroupBody>
						<Rb w={80} label="查找和替换"><FileSearch size={24} strokeWidth={1.5} /></Rb>
					</GroupBody>
				</Group>
			</Ribbon>

			<DocBar>
				<DocTab>
					<svg width="14" height="16" viewBox="0 0 14 16">
						<path d="M3 1h6l3 3v10a1 1 0 0 1-1 1H3a1 1 0 0 1-1-1V2a1 1 0 0 1 1-1z" fill="#cfeee0" />
						<rect x="1" y="7" width="8" height="8" rx="2" fill="#23b27c" />
					</svg>
					这样读书就够了
					<DocDot />
				</DocTab>
				<AddDoc><Plus size={15} strokeWidth={2} /></AddDoc>
				<PanelToggle><Columns2 size={15} strokeWidth={1.3} />面板</PanelToggle>
			</DocBar>

			<Main>
				<LeftArea>
					<Canvas>
						<MapSvg width="1648" height="816" viewBox="0 168 1648 816">
							{BRANCHES.map(b => {
								const stem: Pt = [b.side === 'l' ? 622 : 1043, b.ly];
								return (
									<g key={b.text}>
										<path
											d={taperPath(stem, b.c1 as Pt, b.c2 as Pt, b.hub as Pt, 2.5, 9)}
											fill={b.c}
										/>
										<line x1={b.cx} y1={b.ly} x2={stem[0]} y2={b.ly} stroke={b.c} strokeWidth="2.5" />
										<circle cx={b.cx} cy={b.ly} r="6" fill="#fff" stroke={b.c} strokeWidth="2" />
										<text x={b.cx} y={b.ly + 3} fontSize="8" textAnchor="middle" fill={b.c} fontFamily="Noto Sans">{b.n}</text>
									</g>
								);
							})}
						</MapSvg>
						<SelectBox />
						{BRANCHES.map(b => (
							<TopicText key={b.text} $x={b.x} $y={b.ty}>{b.text}</TopicText>
						))}
						<CentralTopic>
							<CentralTitle>《这样读书就够了》<br />思维导图笔记</CentralTitle>
							<CentralIcons>
								<Paperclip size={15} color="#d8d8d8" strokeWidth={2.4} />
								<svg width="14" height="16" viewBox="0 0 14 16">
									<path d="M1 1h8l4 4v10H1z" fill="#cfe4f5" />
									<rect x="1" y="1" width="7" height="6" fill="#e8643c" />
									<rect x="4" y="9" width="7" height="4" fill="#8fc0e8" />
								</svg>
							</CentralIcons>
						</CentralTopic>
						<VScroll />
					</Canvas>
					<HScrollTrack><HScrollThumb /></HScrollTrack>
					<ColorBar>
						<FillLabel>填充</FillLabel>
						{COLORS.map((c, i) => <Swatch key={i} $c={c} />)}
						<RecentLabel>最近</RecentLabel>
						{RECENT.map((c, i) => <Swatch key={i} $c={c} />)}
					</ColorBar>
				</LeftArea>

				<Panel>
					<PanelTabs>
						<PanelTab><BoxTabIcon /></PanelTab>
						<PanelTab $active><SparkIcon /></PanelTab>
						<PanelTab><PinFace s={22} sw={2} /></PanelTab>
						<PanelTab><FlowerIcon /></PanelTab>
						<PanelTab><HistoryIcon /></PanelTab>
					</PanelTabs>
					<PanelBody>
						<SectionHead>字体<MoreLink>更多</MoreLink></SectionHead>
						<Row $mt={9}>
							<Select $w={121}>微软雅黑<Caret /></Select>
							<Select $w={48} $ml={4}>14<Caret /></Select>
							<IconBtn $w={36}><BigA $size={18}>A<sup>+</sup></BigA></IconBtn>
							<IconBtn $w={32}><BigA $size={18}>A<sup>-</sup></BigA></IconBtn>
						</Row>
						<Row $mt={10}>
							<StyleStrip>
								<StripBtn $w={31} $on>B</StripBtn>
								<StripSep />
								<StripBtn $w={34}><Italic size={15} strokeWidth={1.6} /></StripBtn>
								<StripSep />
								<StripBtn $w={34}><Underline size={15} strokeWidth={1.6} /></StripBtn>
								<StripSep />
								<StripBtn $w={34}><Strikethrough size={15} strokeWidth={1.6} /></StripBtn>
								<StripSep />
								<StripBtn $w={34}><AlignLeft size={15} strokeWidth={1.8} /><ChevronDown size={10} color="#aaa" /></StripBtn>
							</StyleStrip>
							<IconBtn $w={36}><ColorA $bar="#000">A</ColorA><Caret $c="#999" /></IconBtn>
							<IconBtn $w={32}><ColorA $bar="#ffee00" $size={11}>✎</ColorA><Caret $c="#999" /></IconBtn>
						</Row>
						<CheckRow $mt={14}><CheckBox $on><Check size={11} strokeWidth={3} /></CheckBox>应用至同类型主题</CheckRow>
						<Divider $mt={10} />

						<SectionHead $mt={13}>主题</SectionHead>
						<Row $mt={6} $between>
							<Cluster><FieldLabel>形状</FieldLabel><Select $w={56}><ShapePreview /><Chevron /></Select></Cluster>
							<Cluster><FieldLabel>圆角</FieldLabel><Select $w={56}><CornerPreview /><Chevron /></Select></Cluster>
						</Row>
						<CheckRow $mt={10}><CheckBox />填充颜色</CheckRow>
						<CheckRow $mt={16}><CheckBox />阴影</CheckRow>
						<CheckRow $mt={17}><CheckBox />自定义主题宽度</CheckRow>
						<Divider $mt={11} />

						<SectionHead $mt={12}>边框</SectionHead>
						<Row $mt={7} $between>
							<CheckRow $mt={0}><CheckBox $on><Check size={11} strokeWidth={3} /></CheckBox>边框颜色</CheckRow>
							<Select $w={88}><ColorFill $w={60} /><Chevron /></Select>
						</Row>
						<Row $mt={6} $between>
							<Cluster><FieldLabel>宽度</FieldLabel><Select $w={56}><LineSample $h={2} /><Chevron /></Select></Cluster>
							<Cluster><FieldLabel>虚线</FieldLabel><Select $w={56}><LineSample $h={1} /><Chevron /></Select></Cluster>
						</Row>
						<Divider $mt={6} />

						<SectionHead $mt={13}>分支</SectionHead>
						<Row $mt={6} $between>
							<FieldLabel>连接线样式</FieldLabel>
							<Select $w={56}><BranchPreview /><Chevron /></Select>
						</Row>
						<Row $mt={6} $between>
							<Cluster><FieldLabel>线条</FieldLabel><Select $w={56}><ColorFill $w={28} /><Chevron /></Select></Cluster>
							<Cluster><FieldLabel>主题</FieldLabel><Select $w={56}><i /><Chevron /></Select></Cluster>
						</Row>
						<Row $mt={6} $between>
							<Cluster><FieldLabel>宽度</FieldLabel><Select $w={56}><LineSample $h={2} /><Chevron /></Select></Cluster>
							<Cluster><FieldLabel>虚线</FieldLabel><Select $w={56}><LineSample $h={1} /><Chevron /></Select></Cluster>
						</Row>
						<Row $mt={6} $between>
							<Cluster><FieldLabel>箭头</FieldLabel><Select $w={56}><LineSample $h={1} /><Chevron /></Select></Cluster>
							<Cluster><FieldLabel>渐细</FieldLabel><Select $w={56}><TaperPreview /><Chevron /></Select></Cluster>
						</Row>
						<ResetBtn>重置样式</ResetBtn>
					</PanelBody>
				</Panel>
			</Main>

			<StatusBar>
				<StatusCell $w={48} $line><Columns2 size={14} strokeWidth={1.3} /></StatusCell>
				<PageSelect>页面-1<Caret $c="#888" /></PageSelect>
				<StatusCell $w={55} $line><Plus size={16} strokeWidth={1.2} /></StatusCell>
				<StatusCell $w={78} $line $green>页面-1</StatusCell>
				<StatusRight>
					<StatusCell $w={63}>[主题 104]</StatusCell>
					<StatusCell $w={28}><Columns2 size={14} strokeWidth={1.2} /></StatusCell>
					<StatusCell $w={28}><Square size={13} strokeWidth={1.2} /></StatusCell>
					<StatusCell $w={28}><Maximize size={14} strokeWidth={1.2} /></StatusCell>
					<StatusCell $w={22}><Minus size={12} strokeWidth={1.2} /></StatusCell>
					<ZoomTrack><ZoomKnob /></ZoomTrack>
					<StatusCell $w={20}><Plus size={12} strokeWidth={1.2} /></StatusCell>
					<StatusCell $w={38}>85%</StatusCell>
					<StatusCell $w={10}><Caret $c="#888" /></StatusCell>
					<StatusCell $w={31} />
					<StatusCell $w={34}><Maximize size={14} strokeWidth={1.2} /></StatusCell>
					<StatusCell $w={34}><Square size={13} strokeWidth={1.2} /></StatusCell>
				</StatusRight>
			</StatusBar>

			<MiniBar>
				<MiniRow>
					<MiniSelect $w={80}>微软雅黑<Caret /></MiniSelect>
					<MiniSelect $w={50}>14<Caret /></MiniSelect>
					<IconBtn $w={26}><BigA $size={15}>A<sup>+</sup></BigA></IconBtn>
					<IconBtn $w={26}><BigA $size={15}>A<sup>-</sup></BigA></IconBtn>
				</MiniRow>
				<MiniRow $mt={5}>
					<MiniBold>B</MiniBold>
					<IconBtn $w={34}><Italic size={14} strokeWidth={1.5} /></IconBtn>
					<IconBtn $w={24}><Underline size={14} strokeWidth={1.5} /></IconBtn>
					<IconBtn $w={38}><ColorA $bar="#000">A</ColorA><Caret $c="#999" /></IconBtn>
					<IconBtn $w={38}><ColorA $bar="#ffee00" $size={11}>✎</ColorA><Caret $c="#999" /></IconBtn>
					<IconBtn $w={26}><BrushIcon s={15} /></IconBtn>
				</MiniRow>
				<MiniCut>线</MiniCut>
				<MiniTail>
					<MiniMore>···<br />更多</MiniMore>
					<MiniPin $top={0}><Pin size={13} strokeWidth={1.2} color="#aaa" /></MiniPin>
					<MiniPin $top={40}><CollapseCorners /></MiniPin>
				</MiniTail>
			</MiniBar>

			<DropMenu>
				<MenuRow icon={<LayoutGrid size={13} color="#666" />} name="第三方素材库" arrow />
				<MenuRow icon={<FlowerIcon s={13} sw={2} />} name="剪贴画" hotkey="Ctrl+Shift+I" />
				<MenuRow icon={<Table size={13} color="#666" />} name="表格" hotkey="Ctrl+Shift+J" arrow hover />
				<MenuLine $mt={2} $mb={2} />
				<MenuRow icon={<Link size={13} color="#666" />} name="超链接" hotkey="Ctrl+K" />
				<MenuRow icon={<Paperclip size={13} color="#666" />} name="附件" hotkey="Ctrl+H" />
				<MenuRow icon={<PenLine size={13} color="#666" />} name="评论" hotkey="Ctrl+Shift+T" />
				<MenuRow icon={<Tag size={13} color="#666" />} name="标签" hotkey="Ctrl+G" />
				<MenuLine $mt={2} $mb={2} />
				<MenuRow icon={<Omega size={13} color="#666" />} name="字体符号" arrow />
			</DropMenu>

			<TablePop>
				<PopTitle>表格3 x 4</PopTitle>
				<CellGrid>
					{Array.from({ length: 80 }, (_, i) => (
						<Cell key={i} $on={i % 10 < 4 && i < 30} />
					))}
				</CellGrid>
				<InsertRow><InsertTableIcon />插入表格</InsertRow>
			</TablePop>

			<ImeBadge>EN <Moon size={12} strokeWidth={1.4} /> 简</ImeBadge>

			<WashRect />
			<SiteName>电脑技术网</SiteName>
			<TagBadge>TAG</TagBadge>
			<SiteUrl>www.tagxp.com</SiteUrl>
			<FaintMark $x={1794} $y={985} $size={23}>极光下载站</FaintMark>
			<FaintMark $x={1806} $y={1011} $size={17}>www.xz7.com</FaintMark>

			<Overlay width="1920" height="1035" viewBox="0 0 1920 1035">
				<path d="M1327 254l0 17 4-3 3 7 3-1-3-7 5 0z" fill="#fff" stroke="#333" strokeWidth="1" />
				{ARROWS.map(([tail, tip], i) => (
					<ArrowShape key={i} points={arrowPoints(tail, tip)} />
				))}
			</Overlay>
		</Page>
	);
}
